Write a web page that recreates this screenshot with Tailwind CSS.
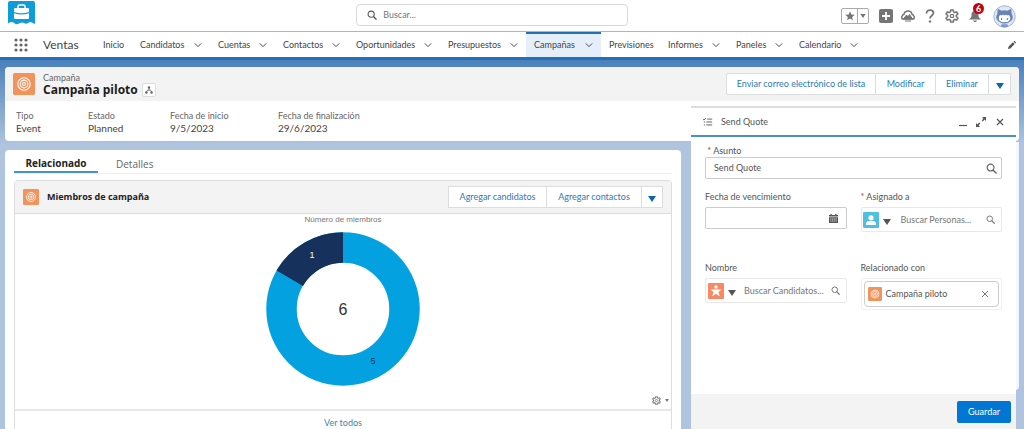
<!DOCTYPE html>
<html lang="es">
<head>
<meta charset="utf-8">
<meta name="viewport" content="width=device-width, initial-scale=1">
<title>Campaña piloto | Ventas</title>
<script src="https://cdn.jsdelivr.net/npm/@tailwindcss/browser@4"></script>
</head>
<body class="bg-[#b0c4df] font-[Lato,'Open_Sans',sans-serif] text-[9px] leading-3 text-[#444]">
<svg class="hidden" aria-hidden="true">
  <symbol id="chev" viewBox="0 0 10 6"><path d="M1 1l4 4 4-4" fill="none" stroke="currentColor" stroke-width="1.2"/></symbol>
  <symbol id="tri" viewBox="0 0 8 6"><path d="M0 0h8L4 6z" fill="currentColor"/></symbol>
  <symbol id="mag" viewBox="0 0 12 12"><circle cx="5" cy="5" r="3.7" fill="none" stroke="currentColor" stroke-width="1.3"/><path d="M7.8 7.8l3.2 3.2" stroke="currentColor" stroke-width="1.6" stroke-linecap="round"/></symbol>
  <symbol id="target" viewBox="0 0 24 24"><rect width="24" height="24" rx="2" fill="#f1935a"/><g fill="none" stroke="#fff" stroke-width="1.2"><circle cx="12" cy="12" r="6.800"/><circle cx="12" cy="12" r="4.200"/><circle cx="12" cy="12" r="1.600"/></g></symbol>
  <symbol id="gear" viewBox="0 0 14 14"><path d="M5.800 1h2.400l.4 1.900 1.200.7 1.900-.7 1.200 2.100L11.400 6.300v1.400l1.500 1.300-1.200 2.100-1.900-.7-1.200.7-.4 1.900H5.800l-.4-1.900-1.200-.7-1.900.7L1.100 9l1.500-1.300V6.300L1.100 5l1.200-2.100 1.900.7 1.200-.7z" fill="none" stroke="currentColor" stroke-width="1.600" stroke-linejoin="round"/><circle cx="7" cy="7" r="1.700" fill="none" stroke="currentColor" stroke-width="1.300"/></symbol>
</svg>
<div class="flex min-h-screen flex-col">
  <header class="grid h-8 shrink-0 grid-cols-[9fr_272px_10fr] items-center border-b border-[#9dbac6] bg-white">
    <svg class="ml-2 h-8 w-7 self-start" viewBox="0 0 28 32"><path d="M0 3q0-2 2-2h23q2 0 2 2v21l-3-1.500q-2-1-4 .5t-4 0q-2-1-5 .5t-5-.5-6 .5z" fill="#0d9ddb"/><path d="M10 8V6.500Q10 5 11.500 5h4Q17 5 17 6.500V8" fill="none" stroke="#fff" stroke-width="1.500"/><path d="M7 8h13q1 0 1 1v3q-7.500 2.600-15 0V9q0-1 1-1zM6 13.300q7.500 2.400 15 0V18q0 1-1 1H7q-1 0-1-1z" fill="#fff"/></svg>
    <label class="mt-1 flex h-[22px] items-center gap-1.5 self-start rounded-sm border border-[#d8d8d8] px-2.5 text-[#777]">
      <svg class="size-2.5 shrink-0 text-[#555]"><use href="#mag"/></svg>
      <input type="search" aria-label="Buscar" placeholder="Buscar..." class="w-full bg-transparent outline-none placeholder:text-[#777]">
    </label>
    <div class="flex items-center justify-end pr-2 text-[#757575]">
      <div class="mr-2.5 flex h-4 rounded-xs border border-[#aaa]">
        <button aria-label="Favoritos" class="flex w-4 items-center justify-center border-r border-[#aaa]"><svg class="size-2.5" viewBox="0 0 12 12"><path d="M6 .3l1.600 3.800 4.100.4-3.100 2.700.9 4L6 9.100l-3.500 2.100.9-4L.3 4.500l4.100-.4z" fill="currentColor"/></svg></button>
        <button aria-label="Lista de favoritos" class="flex w-2.5 items-center justify-center"><svg class="h-1 w-1.5"><use href="#tri"/></svg></button>
      </div>
      <button aria-label="Crear" class="mr-2"><svg class="size-3.5" viewBox="0 0 14 14"><rect width="14" height="14" rx="2" fill="currentColor"/><path d="M7 3v8M3 7h8" stroke="#fff" stroke-width="1.800"/></svg></button>
      <button aria-label="Trailhead" class="mr-2.5"><svg class="h-3 w-3.5" viewBox="0 0 14 12"><path d="M1.200 9C-.2 6 2.500 4.500 3 4.300 3.500 1.500 5.500 1 7 1s3.500.5 4 3.300C11.500 4.500 14.200 6 12.800 9z" fill="none" stroke="currentColor" stroke-width="1.500"/><path d="M2.500 9l3-4 1.500 2 1.500-2.500 3 4.500zM4 11h6" fill="currentColor" stroke="currentColor" stroke-width="1"/></svg></button>
      <button aria-label="Ayuda" class="mr-2.5"><svg class="h-3.5 w-2.5" viewBox="0 0 10 14"><path d="M1.500 4.500C1.500-.3 8.500.2 8.500 4 8.500 6.500 5 6.500 5 9.500" fill="none" stroke="currentColor" stroke-width="1.800"/><circle cx="5" cy="12.500" r="1.200" fill="currentColor"/></svg></button>
      <button aria-label="Configuración" class="mr-2.5"><svg class="size-3.5"><use href="#gear"/></svg></button>
      <button aria-label="Notificaciones" class="relative mr-3"><svg class="h-3.5 w-3" viewBox="0 0 12 14"><path d="M6 2C3 2 2.500 4 2.500 6.500S1 9 0 10.500h12C11 9 9.500 9 9.500 6.500S9 2 6 2zM4 11.500h4Q7.500 13 6 13t-2-1.500z" fill="currentColor"/></svg><span class="absolute -top-1.5 left-1 size-[11px] rounded-full bg-[#c6000f] text-center leading-[11px] font-bold text-white">6</span></button>
      <button aria-label="Ver perfil"><svg class="size-[23px]" viewBox="0 0 24 24"><circle cx="12" cy="12" r="11.200" fill="#dfe9f5" stroke="#9fb2d3"/><path d="M5 4l4 2q3-1 6 0l4-2 .5 5q2.500 4-.5 7.500Q16 19.500 12 19.500t-7-3Q2 13 4.500 9z" fill="#6a82b8"/><path d="M6 13Q7 9.500 9 11q1.500-1.500 3 0 1.500-1.500 3 0 2-1.500 3 2 .5 5-6 5t-6-5z" fill="#fff"/><circle cx="9" cy="14.500" r=".8" fill="#34477c"/><circle cx="15" cy="14.500" r=".8" fill="#34477c"/><path d="M9 20h6l1 2.500q-4 1.200-8 0z" fill="#7f97c8"/></svg></button>
    </div>
  </header>

  <nav class="flex h-7 shrink-0 items-stretch border-b-3 border-[#2271b8] bg-white pl-3.5">
    <button aria-label="Iniciador de aplicación" class="mr-[15px] flex items-center text-[#666]"><svg class="size-3.5" viewBox="0 0 14 14" fill="currentColor"><circle cx="2" cy="2" r="1.600"/><circle cx="7" cy="2" r="1.600"/><circle cx="12" cy="2" r="1.600"/><circle cx="2" cy="7" r="1.600"/><circle cx="7" cy="7" r="1.600"/><circle cx="12" cy="7" r="1.600"/><circle cx="2" cy="12" r="1.600"/><circle cx="7" cy="12" r="1.600"/><circle cx="12" cy="12" r="1.600"/></svg></button>
    <span class="flex w-[52px] items-center text-xs text-[#444]">Ventas</span>
    <a href="#" class="flex w-[37px] items-center px-2">Inicio</a>
    <a href="#" class="flex w-[78px] items-center justify-between px-2">Candidatos <svg class="h-1.5 w-2"><use href="#chev"/></svg></a>
    <a href="#" class="flex w-[65px] items-center justify-between px-2">Cuentas <svg class="h-1.5 w-2"><use href="#chev"/></svg></a>
    <a href="#" class="flex w-[73px] items-center justify-between px-2">Contactos <svg class="h-1.5 w-2"><use href="#chev"/></svg></a>
    <a href="#" class="flex w-[92px] items-center justify-between px-2">Oportunidades <svg class="h-1.5 w-2"><use href="#chev"/></svg></a>
    <a href="#" class="flex w-[86px] items-center justify-between px-2">Presupuestos <svg class="h-1.5 w-2"><use href="#chev"/></svg></a>
    <a href="#" aria-current="page" class="flex w-[75px] items-center justify-between border-t-2 border-[#2271b8] bg-[#e5effa] px-2 pb-0.5">Campañas <svg class="h-1.5 w-2"><use href="#chev"/></svg></a>
    <a href="#" class="flex w-[59px] items-center px-2">Previsiones</a>
    <a href="#" class="flex w-[68px] items-center justify-between px-2">Informes <svg class="h-1.5 w-2"><use href="#chev"/></svg></a>
    <a href="#" class="flex w-[63px] items-center justify-between px-2">Paneles <svg class="h-1.5 w-2"><use href="#chev"/></svg></a>
    <a href="#" class="flex w-[75px] items-center justify-between px-2">Calendario <svg class="h-1.5 w-2"><use href="#chev"/></svg></a>
    <button aria-label="Modificar navegación" class="mr-2 ml-auto flex items-center text-[#555]"><svg class="size-2" viewBox="0 0 9 9"><path d="M0 9l.7-2.700L5.500 1.500l2 2L2.700 8.300zM6.200.9l.6-.6q.5-.4 1 0l1 1q.4.500 0 1l-.6.6z" fill="currentColor"/></svg></button>
  </nav>

  <main class="flex grow flex-col bg-linear-to-b from-[#4a80bb] to-[#b0c4df] to-[85px] px-[5px] pt-[7px]">
    <section class="shrink-0 overflow-hidden rounded-sm bg-white">
      <div class="flex h-[34px] items-center bg-[#f3f3f3] px-2">
        <svg class="size-[22px] shrink-0"><use href="#target"/></svg>
        <div class="ml-2 flex flex-col">
          <span class="leading-[11px] text-[#666]">Campaña</span>
          <h1 class="flex items-center gap-1 font-['Open_Sans',sans-serif] text-xs leading-[14px] font-bold text-[#1c1c1c]">Campaña piloto
            <button aria-label="Ver jerarquía" class="flex size-3.5 items-center justify-center rounded-xs border border-[#ddd] bg-white text-[#666]"><svg class="size-2" viewBox="0 0 8 8"><path d="M4 2v2.500M1.500 6l1-2h3l1 2" fill="none" stroke="currentColor" stroke-width=".8"/><circle cx="4" cy="1.500" r="1.200" fill="currentColor"/><circle cx="1.400" cy="6.500" r="1.200" fill="currentColor"/><circle cx="6.600" cy="6.500" r="1.200" fill="currentColor"/></svg></button></h1>
        </div>
        <div class="ml-auto flex h-[22px] divide-x divide-[#ddd] rounded-xs border border-[#ddd] bg-white text-[#2a7ab8]">
          <button class="w-[149px]">Enviar correo electrónico de lista</button>
          <button class="w-15">Modificar</button>
          <button class="w-[53px]">Eliminar</button>
          <button aria-label="Más acciones" class="flex w-[21px] items-center justify-center pt-1 text-[#0b66b0]"><svg class="h-1.5 w-2"><use href="#tri"/></svg></button>
        </div>
      </div>
      <dl class="flex h-10 pt-[9px] pl-[11px]">
        <div class="w-18"><dt class="text-[#666]">Tipo</dt><dd class="text-[10px]">Event</dd></div>
        <div class="w-[82px]"><dt class="text-[#666]">Estado</dt><dd class="text-[10px]">Planned</dd></div>
        <div class="w-27"><dt class="text-[#666]">Fecha de inicio</dt><dd class="text-[10px]">9/5/2023</dd></div>
        <div><dt class="text-[#666]">Fecha de finalización</dt><dd class="text-[10px]">29/6/2023</dd></div>
      </dl>
    </section>

    <div class="mt-[9px] flex grow gap-2.5">
      <section class="min-w-0 grow rounded-t-sm bg-white px-[9px]">
        <div role="tablist" class="flex h-6 items-stretch border-b border-[#eee] font-['Open_Sans',sans-serif] text-[10px]">
          <button role="tab" aria-selected="true" class="w-21 border-b-2 border-[#4a92c0] pt-1 font-bold text-[#222]">Relacionado</button>
          <button role="tab" aria-selected="false" class="ml-[18px] pt-1 text-[#666]">Detalles</button>
        </div>
        <article class="mt-1.5 rounded-t-sm border border-b-0 border-[#ddd]">
          <div class="flex h-[33px] items-center border-b border-[#ddd] bg-[#f3f3f3] px-2">
            <svg class="size-4"><use href="#target"/></svg>
            <h2 class="ml-2 font-['Open_Sans',sans-serif] text-[9px] font-bold text-[#222]">Miembros de campaña</h2>
            <div class="ml-auto flex h-[22px] divide-x divide-[#ddd] border border-[#ddd] bg-white text-[#2a7ab8]">
              <button class="w-[98px]">Agregar candidatos</button>
              <button class="w-[95px]">Agregar contactos</button>
              <button aria-label="Más acciones" class="flex w-5 items-center justify-center pt-1 text-[#0b66b0]"><svg class="h-1.5 w-2"><use href="#tri"/></svg></button>
            </div>
          </div>
          <figure class="relative flex flex-col items-center border-b-2 border-[#e8e8e8] pb-[23px]">
            <figcaption class="font-['Liberation_Sans',sans-serif] text-[8px] text-[#777]">Número de miembros</figcaption>
            <svg class="mt-1.5 size-[154px] font-['Liberation_Sans',sans-serif]" viewBox="-77 -77 154 154" role="img" aria-label="Número de miembros: 6">
              <circle r="61.500" fill="none" stroke="#04a1e1" stroke-width="30.500"/>
              <path d="M-66.500-38.400A76.800 76.800 0 0 1 0-76.800V-46.200A46.200 46.200 0 0 0-40-23.100z" fill="#16325c"/>
              <text y="6" text-anchor="middle" font-size="16" fill="#333">6</text>
              <text x="-31" y="-51" text-anchor="middle" font-size="9" fill="#fff">1</text>
              <text x="30" y="55" text-anchor="middle" font-size="9" fill="#16325c">5</text>
            </svg>
            <button aria-label="Opciones del gráfico" class="absolute right-0.5 bottom-1 flex items-center gap-1 text-[#777]"><svg class="size-[9px]"><use href="#gear"/></svg><svg class="h-[3px] w-1"><use href="#tri"/></svg></button>
          </figure>
          <a href="#" class="flex h-6 items-center justify-center text-[#3c86b5]">Ver todos</a>
        </article>
      </section>
      <aside class="-mt-2 h-[248px] w-[328px] shrink-0 rounded-b-sm bg-[#f4f8fd]"></aside>
    </div>
  </main>
</div>

<form class="fixed right-2 bottom-0 flex h-[323px] w-[325px] flex-col border-t-2 border-[#ddd] bg-white">
  <div class="flex h-[29px] shrink-0 items-center border-b-2 border-[#4a8fc0] px-3 text-[#555]">
    <svg class="h-2.5 w-2.5" viewBox="0 0 12 10"><path d="M0 1.500l1.200 1.200L3.300.5M5 1.500h6M4 5h7M4 8.500h7M1 5h1.500M1 8.500h1.500" fill="none" stroke="currentColor" stroke-width="1.100"/></svg>
    <h2 class="ml-2">Send Quote</h2>
    <button type="button" aria-label="Minimizar" class="ml-auto"><svg class="size-2.5" viewBox="0 0 10 10"><path d="M1 8.500h8" stroke="currentColor" stroke-width="1.200"/></svg></button>
    <button type="button" aria-label="Maximizar" class="ml-2"><svg class="size-2.5" viewBox="0 0 10 10"><path d="M6 0h4v4L8.600 2.600 6.700 4.500l-1-1 1.700-2.100zM4 10H0V6l1.400 1.400 1.900-1.900 1 1-1.700 2.100z" fill="currentColor"/></svg></button>
    <button type="button" aria-label="Cerrar" class="ml-2.5"><svg class="size-2" viewBox="0 0 8 8"><path d="M1 1l6 6M7 1L1 7" stroke="currentColor" stroke-width="1.200"/></svg></button>
  </div>
  <div class="grid grow grid-cols-2 content-start gap-x-3.5 px-3.5 pt-2 text-[#555]">
    <div class="col-span-2 h-[46px]">
      <label for="asunto" class="block">&nbsp;* Asunto</label>
      <div class="flex h-[22px] items-center rounded-xs border border-[#ccc] pr-1 pl-2">
        <input id="asunto" value="Send Quote" class="min-w-0 grow outline-none">
        <svg class="size-[11px] shrink-0 text-[#666]"><use href="#mag"/></svg>
      </div>
    </div>
    <div class="h-[71px]">
      <label for="fecha" class="block pb-1">Fecha de vencimiento</label>
      <div class="flex h-[22px] items-center rounded-xs border border-[#ccc] px-2">
        <input id="fecha" class="min-w-0 grow outline-none">
        <svg class="size-[9px] shrink-0 text-[#555]" viewBox="0 0 9 9"><path d="M0 1h1.500V0h1.300v1h3.400V0h1.300v1H9v1.500H0zM0 3.200h9V9H0z" fill="currentColor"/><path d="M1.200 5h6.600M1.200 7h6.600" stroke="#fff" stroke-width=".8" stroke-dasharray="1.200 .6"/></svg>
      </div>
    </div>
    <div class="h-[71px]">
      <label for="asignado" class="block pb-1"><span class="text-[#c23934]">*</span> Asignado a</label>
      <div class="flex h-[25px] items-center rounded-xs border border-[#e8e8e8] pr-1.5 pl-px text-[#777]">
        <svg class="size-4 shrink-0" viewBox="0 0 16 16"><rect width="16" height="16" rx="1" fill="#4fbfe0"/><circle cx="8" cy="5.800" r="2.600" fill="#fff"/><path d="M3 13v-1.500Q3 9.500 6 9h4q3 .5 3 2.500V13z" fill="#fff"/></svg>
        <button type="button" aria-label="Tipo de objeto" class="mt-1 mr-2.5 ml-1 shrink-0 text-[#555]"><svg class="h-1.5 w-2"><use href="#tri"/></svg></button>
        <input id="asignado" placeholder="Buscar Personas..." class="min-w-0 grow outline-none placeholder:text-[#777]">
        <svg class="size-[9px] shrink-0"><use href="#mag"/></svg>
      </div>
    </div>
    <div>
      <label for="nombre" class="block pb-1">Nombre</label>
      <div class="flex h-[25px] items-center rounded-xs border border-[#e8e8e8] pr-1.5 pl-0.5 text-[#777]">
        <svg class="size-4 shrink-0" viewBox="0 0 16 16"><rect width="16" height="16" rx="1" fill="#f88962"/><circle cx="8" cy="4" r="1.700" fill="#fff"/><path d="M2.500 6.500h11L10.500 9l1.300 4.200L8 11l-3.800 2.200L5.500 9z" fill="#fff"/></svg>
        <button type="button" aria-label="Tipo de objeto" class="mt-1 mr-2 ml-1 shrink-0 text-[#555]"><svg class="h-1.5 w-2"><use href="#tri"/></svg></button>
        <input id="nombre" placeholder="Buscar Candidatos..." class="min-w-0 grow outline-none placeholder:text-[#777]">
        <svg class="size-[9px] shrink-0"><use href="#mag"/></svg>
      </div>
    </div>
    <div>
      <span class="block pb-1">Relacionado con</span>
      <div class="rounded-xs border border-[#f0f0f0] p-0.5">
        <div class="flex h-[26px] items-center rounded-sm border border-[#ccc] px-[3px]">
          <svg class="size-3.5"><use href="#target"/></svg>
          <span class="ml-1 grow">Campaña piloto</span>
          <button type="button" aria-label="Quitar Campaña piloto" class="mr-1.5 text-[#777]"><svg class="size-2" viewBox="0 0 8 8"><path d="M1 1l6 6M7 1L1 7" stroke="currentColor"/></svg></button>
        </div>
      </div>
    </div>
  </div>
  <div class="flex h-[35px] shrink-0 items-center justify-end bg-[#f3f3f3] pr-[5px]">
    <button type="submit" class="h-[22px] w-[54px] rounded-xs bg-[#0176d3] text-white">Guardar</button>
  </div>
</form>
</body>
</html>
